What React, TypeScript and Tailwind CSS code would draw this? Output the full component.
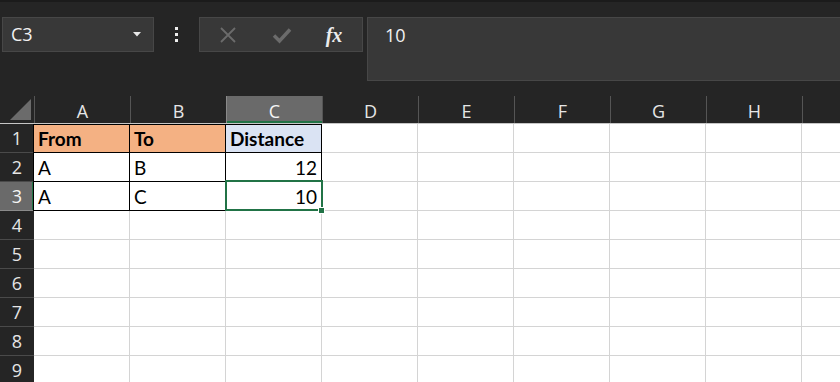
const cols = ['A', 'B', 'C', 'D', 'E', 'F', 'G', 'H', 'I'];
const rows = [1, 2, 3, 4, 5, 6, 7, 8, 9];

type Cell = { text: string; bold?: boolean; right?: boolean; bg?: string };

const data: Record<string, Cell> = {
  A1: { text: 'From', bold: true, bg: 'bg-[#f4b183]' },
  B1: { text: 'To', bold: true, bg: 'bg-[#f4b183]' },
  C1: { text: 'Distance', bold: true, bg: 'bg-[#dae3f3]' },
  A2: { text: 'A' },
  B2: { text: 'B' },
  C2: { text: '12', right: true },
  A3: { text: 'A' },
  B3: { text: 'C' },
  C3: { text: '10', right: true },
};

const uiFont = { fontFamily: '"Open Sans", "Noto Sans", sans-serif' };
const cellFont = { fontFamily: 'Lato, "Liberation Sans", sans-serif' };

function FormulaRow() {
  return (
    <div className="flex items-start pt-[15px] h-[94px]" style={uiFont}>
      <div className="ml-[2px] w-[152px] h-[35px] flex items-center justify-between pl-[8px] pr-[12px] bg-[#383838] border border-[#474747] text-[#f2f2f2] text-[18px]">
        <span>C3</span>
        <svg width="8" height="5" viewBox="0 0 8 5">
          <path d="M0 0 L8 0 L4 4.5 Z" fill="#e8e8e8" />
        </svg>
      </div>
      <div className="w-[45px] h-[35px] flex flex-col items-center justify-center gap-[3px]">
        <div className="w-[3px] h-[3px] bg-[#eeeeee]" />
        <div className="w-[3px] h-[3px] bg-[#eeeeee]" />
        <div className="w-[3px] h-[3px] bg-[#eeeeee]" />
      </div>
      <div className="w-[164px] h-[35px] flex items-center bg-[#383838] border border-[#474747]">
        <div className="w-[56px] flex justify-center">
          <svg width="18" height="18" viewBox="0 0 18 18">
            <path d="M2 2 L16 16 M16 2 L2 16" stroke="#6b6b6b" strokeWidth="1.8" />
          </svg>
        </div>
        <div className="w-[52px] flex justify-center">
          <svg width="20" height="18" viewBox="0 0 20 18">
            <path d="M2 9.5 L7.5 15 L18 3.5" stroke="#6b6b6b" strokeWidth="3.5" fill="none" />
          </svg>
        </div>
        <div
          className="w-[52px] flex justify-center text-[20px] italic font-bold text-[#ececec] leading-none"
          style={{ fontFamily: '"Liberation Serif", "DejaVu Serif", serif' }}
        >
          fx
        </div>
      </div>
      <div className="ml-[4px] flex-1 h-[64px] bg-[#383838] border border-[#474747] border-r-0 pl-[17px] pt-[4px] text-[#f2f2f2] text-[18px]">
        10
      </div>
    </div>
  );
}

function HeaderRow() {
  return (
    <div className="flex h-[28px] border-b border-[#c6c6c6]" style={uiFont}>
      <div className="w-[34px] shrink-0 flex items-end justify-end pr-[3px] pb-[3px]">
        <svg width="21" height="21" viewBox="0 0 21 21">
          <path d="M21 0 L21 21 L0 21 Z" fill="#6b6b6b" />
        </svg>
      </div>
      {cols.map((c) => (
        <div
          key={c}
          className={`w-[96px] shrink-0 flex items-end justify-center text-[18px] leading-[24px] border-l ${
            c === 'C'
              ? 'bg-[#6a6a6a] text-[#f5f5f5] border-[#8a8a8a] shadow-[inset_0_-2px_0_#217346]'
              : 'text-[#e6e6e6] border-[#555555]'
          }`}
        >
          {c === 'I' ? '' : c}
        </div>
      ))}
    </div>
  );
}

function GridRow({ r }: { r: number }) {
  const selectedRow = r === 3;
  return (
    <div className="flex h-[29px]">
      <div
        className={`w-[34px] shrink-0 flex items-center justify-center text-[18px] border-b ${
          selectedRow
            ? 'bg-[#6a6a6a] text-[#f5f5f5] border-[#8a8a8a] shadow-[inset_-2px_0_0_#217346]'
            : 'text-[#e6e6e6] border-[#4a4a4a]'
        }`}
        style={uiFont}
      >
        {r}
      </div>
      {cols.map((c) => {
        const key = `${c}${r}`;
        const cell = data[key];
        const inTable = !!cell;
        const selected = key === 'C3';
        return (
          <div
            key={key}
            className={`relative w-[96px] shrink-0 flex items-end pb-[1px] leading-[24px] px-[4px] text-[19px] text-black border-r border-b ${
              inTable ? 'border-black' : 'border-[#d4d4d4]'
            } ${cell?.bg ?? 'bg-white'} ${cell?.right ? 'justify-end' : ''} ${cell?.bold ? 'font-bold' : ''} ${
              c === 'A' && inTable ? 'border-l border-l-black ml-[-1px] w-[97px]' : ''
            } ${r === 1 && inTable ? 'border-t border-t-black' : ''} ${selected ? 'z-10' : ''}`}
            style={cellFont}
          >
            {cell?.text}
            {selected && (
              <>
                <div className="absolute left-[-1px] top-[-2px] right-[-2px] bottom-[-1px] border-2 border-[#217346]" />
                <div className="absolute right-[-4px] bottom-[-4px] w-[7px] h-[7px] bg-[#217346] border border-white" />
              </>
            )}
          </div>
        );
      })}
    </div>
  );
}

export default function App() {
  return (
    <div className="w-[840px] h-[382px] overflow-hidden bg-[#252525]">
      <div className="h-[2px] bg-[#1b1b1b]" />
      <FormulaRow />
      <HeaderRow />
      {rows.map((r) => (
        <GridRow key={r} r={r} />
      ))}
    </div>
  );
}
